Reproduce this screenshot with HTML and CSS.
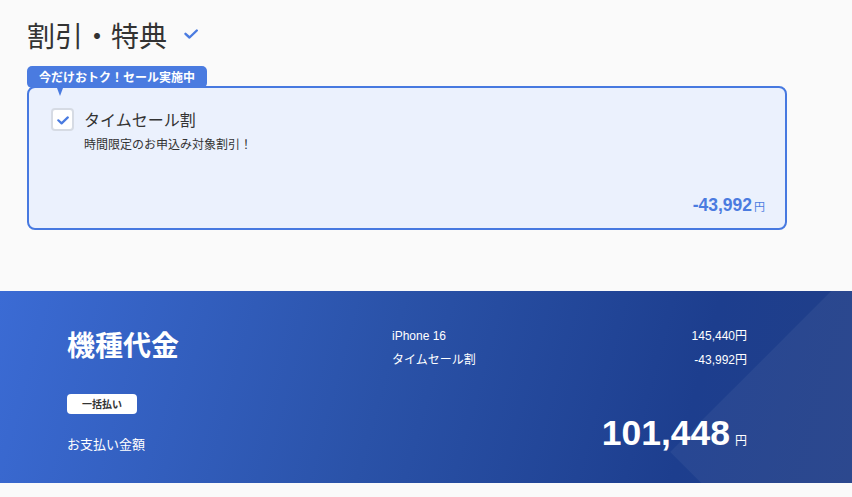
FILE: index.html
```html
<!DOCTYPE html>
<html lang="ja">
<head>
<meta charset="utf-8">
<title>割引・特典</title>
<link rel="stylesheet" href="styles.css">
</head>
<body>
<section class="discounts">
  <h2 class="section-title">
    <span>割引・特典</span>
    <svg class="title-check" width="14" height="10" viewBox="0 0 14 10"><polyline points="1.5,4.8 5.5,8.5 12.8,1.5" fill="none" stroke="#4a7be0" stroke-width="2.4" stroke-linecap="round" stroke-linejoin="round"/></svg>
  </h2>
  <div class="offer">
    <div class="offer-badge">今だけおトク！セール実施中</div>
    <div class="offer-row">
      <span class="checkbox">
        <svg width="12" height="9" viewBox="0 0 12 9"><polyline points="1.3,4.3 4.6,7.4 10.8,1.4" fill="none" stroke="#4a7be0" stroke-width="2.2" stroke-linecap="round" stroke-linejoin="round"/></svg>
      </span>
      <div class="offer-text">
        <div class="offer-name">タイムセール割</div>
        <div class="offer-desc">時間限定のお申込み対象割引！</div>
      </div>
    </div>
    <div class="offer-price"><span class="num">-43,992</span><span class="yen">円</span></div>
  </div>
</section>
<section class="summary">
  <div class="summary-inner">
    <div class="summary-left">
      <h3 class="summary-title">機種代金</h3>
      <span class="pill">一括払い</span>
      <div class="pay-label">お支払い金額</div>
    </div>
    <div class="summary-right">
      <div class="line"><span>iPhone 16</span><span>145,440円</span></div>
      <div class="line"><span>タイムセール割</span><span>-43,992円</span></div>
      <div class="total"><span class="total-num">101,448</span><span class="total-yen">円</span></div>
    </div>
  </div>
</section>
</body>
</html>
```

FILE: styles.css
```css
* { box-sizing: border-box; }
html, body { margin: 0; padding: 0; }
body {
  background: #fafafa;
  font-family: "Liberation Sans", "Noto Sans CJK JP", sans-serif;
  color: #333;
  width: 852px;
  height: 497px;
  overflow: hidden;
}
.discounts {
  padding: 15px 65px 61px 27px;
}
.section-title {
  margin: 0;
  display: flex;
  align-items: center;
  gap: 17px;
  font-family: "Noto Sans CJK JP", sans-serif;
  font-size: 28px;
  font-weight: 400;
  line-height: 40px;
  height: 40px;
  color: #333;
}
.title-check { margin-top: -2px; }
.offer {
  position: relative;
  margin-top: 31px;
  height: 144px;
  border: 2px solid #4779e0;
  border-radius: 8px;
  background: #ebf1fd;
  padding: 20px 20px 0 22px;
  display: flex;
  flex-direction: column;
}
.offer-badge {
  position: absolute;
  left: -2px;
  top: -22px;
  height: 22px;
  line-height: 22px;
  padding: 0 12px;
  background: #4a7be0;
  color: #fff;
  font-family: "Noto Sans CJK JP", sans-serif;
  font-size: 12px;
  font-weight: 700;
  border-radius: 5px;
}
.offer-badge::after {
  content: "";
  position: absolute;
  left: 30px;
  bottom: -8px;
  border-left: 3px solid transparent;
  border-right: 3px solid transparent;
  border-top: 8px solid #4a7be0;
}
.offer-row {
  display: flex;
  gap: 10px;
  align-items: flex-start;
}
.checkbox {
  width: 23px;
  height: 23px;
  flex: none;
  background: #fff;
  border: 2px solid #d6dbe4;
  border-radius: 4px;
  display: flex;
  align-items: center;
  justify-content: center;
}
.checkbox svg { margin-top: 1px; }
.offer-name {
  font-family: "Noto Sans CJK JP", sans-serif;
  font-size: 16px;
  line-height: 22px;
  color: #333;
}
.offer-desc {
  font-family: "Noto Sans CJK JP", sans-serif;
  font-size: 12px;
  line-height: 16px;
  margin-top: 6px;
  color: #333;
}
.offer-price {
  margin-top: auto;
  margin-bottom: 13px;
  display: flex;
  justify-content: flex-end;
  align-items: baseline;
  gap: 2px;
  color: #4a7be0;
}
.offer-price .num {
  font-size: 17.5px;
  font-weight: 700;
  line-height: 20px;
}
.offer-price .yen {
  font-family: "Noto Sans CJK JP", sans-serif;
  font-size: 11px;
}
.summary {
  position: relative;
  overflow: hidden;
  height: 192px;
  background: linear-gradient(105deg, #3b6bd4 0%, #2a52a8 45%, #1d3e8e 80%, #213f88 100%);
  color: #fff;
}
.summary::before {
  content: "";
  position: absolute;
  width: 400px;
  height: 400px;
  left: 753px;
  top: -39px;
  transform: rotate(45deg);
  background: rgba(255, 255, 255, 0.05);
}
.summary-inner {
  position: relative;
  display: grid;
  grid-template-columns: 325px 1fr;
  padding: 33px 105px 29px 67px;
  height: 100%;
}
.summary-left {
  display: flex;
  flex-direction: column;
  align-items: flex-start;
}
.summary-title {
  margin: 0;
  font-family: "Noto Sans CJK JP", sans-serif;
  font-size: 28px;
  font-weight: 700;
  line-height: 40px;
}
.pill {
  margin-top: 30px;
  width: 70px;
  height: 20px;
  line-height: 20px;
  background: #fff;
  color: #333;
  border-radius: 4px;
  text-align: center;
  font-family: "Noto Sans CJK JP", sans-serif;
  font-size: 10px;
  font-weight: 700;
}
.pay-label {
  margin-top: 20px;
  font-family: "Noto Sans CJK JP", sans-serif;
  font-size: 13px;
  line-height: 20px;
}
.summary-right {
  display: flex;
  flex-direction: column;
}
.line {
  display: flex;
  justify-content: space-between;
  font-size: 12px;
  line-height: 24px;
}
.total {
  margin-top: auto;
  display: flex;
  justify-content: flex-end;
  align-items: baseline;
  gap: 5px;
}
.total-num {
  font-size: 35.5px;
  font-weight: 700;
  line-height: 42px;
}
.total-yen {
  font-family: "Noto Sans CJK JP", sans-serif;
  font-size: 12px;
}
```
